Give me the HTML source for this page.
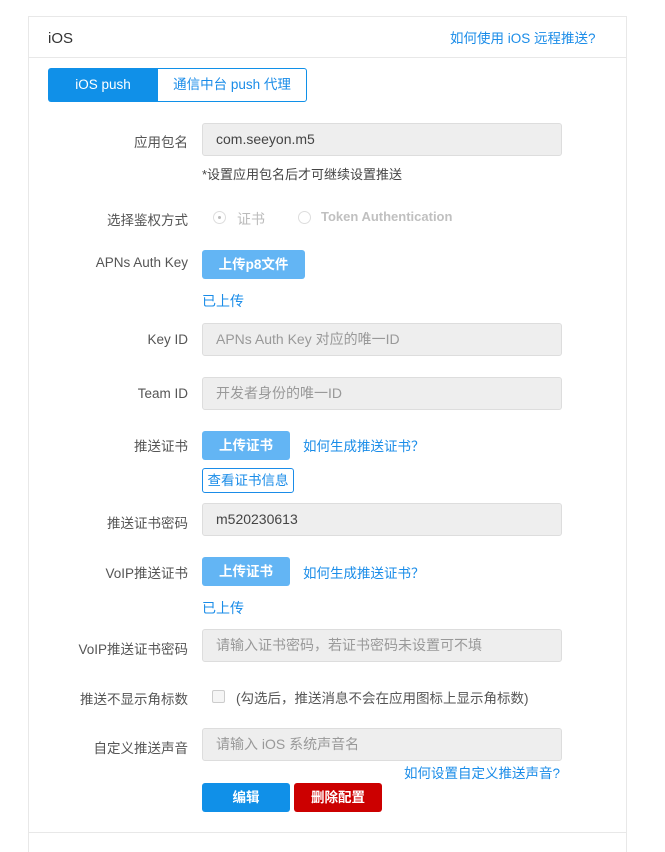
<!DOCTYPE html>
<html><head><meta charset="utf-8"><style>
*{box-sizing:border-box;margin:0;padding:0}
html{width:665px;height:852px;overflow:hidden}
body{width:665px;height:852px;background:#fff;font-family:"Liberation Sans","Noto Sans CJK SC",sans-serif;font-size:14px;color:#333;position:relative;overflow:hidden}
.card{position:absolute;left:28px;top:16px;width:599px;height:836px;border:1px solid #e8e8e8;border-bottom:none}
.hline{position:absolute;left:28px;width:599px;height:1px;background:#e8e8e8}
.a{position:absolute;white-space:nowrap}
.lab{position:absolute;right:477px;white-space:nowrap;color:#555;font-size:13.5px}
.inp{position:absolute;left:202px;width:360px;height:33px;background:#eee;border:1px solid #ddd;border-radius:3px;padding-left:13px;line-height:31px;font-size:14px;color:#999}
.btn{position:absolute;border-radius:3px;color:#fff;text-align:center;font-size:13.5px;font-weight:bold}
.lb{background:#63b5f4}
.link{color:#1a8ce8}
</style></head><body>
<div class="card"></div>
<div class="a" style="left:48px;top:30px;font-size:15px;color:#333">iOS</div>
<div class="a link" style="left:450px;top:27px;font-size:13.5px">如何使用 iOS 远程推送?</div>
<div class="hline" style="top:57px"></div>
<div class="a" style="left:48px;top:68px;width:110px;height:34px;background:#1090e8;color:#fff;border-radius:3px 0 0 3px;text-align:center;line-height:34px;font-size:13.5px">iOS push</div>
<div class="a link" style="left:157px;top:68px;width:150px;height:34px;border:1px solid #1090e8;border-radius:0 3px 3px 0;text-align:center;line-height:32px;font-size:13.5px">通信中台 push 代理</div>

<div class="lab" style="top:131px">应用包名</div>
<div class="inp" style="top:123px;color:#444">com.seeyon.m5</div>
<div class="a" style="left:202px;top:164px;font-size:13px;color:#444">*设置应用包名后才可继续设置推送</div>

<div class="lab" style="top:209px">选择鉴权方式</div>
<div class="a" style="left:213px;top:211px;width:13px;height:13px;border:1px solid #ddd;border-radius:50%"><div style="position:absolute;left:4px;top:4px;width:3px;height:3px;border-radius:50%;background:#bbb"></div></div>
<div class="a" style="left:237px;top:209px;color:#bbb">证书</div>
<div class="a" style="left:298px;top:211px;width:13px;height:13px;border:1px solid #ddd;border-radius:50%"></div>
<div class="a" style="left:321px;top:209px;color:#c0c0c0;font-weight:bold;font-size:13px">Token Authentication</div>

<div class="lab" style="top:255px">APNs Auth Key</div>
<div class="btn lb" style="left:202px;top:250px;width:103px;height:29px;line-height:29px">上传p8文件</div>
<div class="a link" style="left:202px;top:291px">已上传</div>

<div class="lab" style="top:332px">Key ID</div>
<div class="inp" style="top:323px">APNs Auth Key 对应的唯一ID</div>
<div class="lab" style="top:386px">Team ID</div>
<div class="inp" style="top:377px">开发者身份的唯一ID</div>

<div class="lab" style="top:435px">推送证书</div>
<div class="btn lb" style="left:202px;top:431px;width:88px;height:29px;line-height:29px">上传证书</div>
<div class="a link" style="left:303px;top:435px;font-size:13.5px">如何生成推送证书？</div>
<div class="a link" style="left:202px;top:468px;width:92px;height:25px;border:1px solid #1a8ce8;border-radius:3px;text-align:center;line-height:23px;font-size:13.5px">查看证书信息</div>

<div class="lab" style="top:512px">推送证书密码</div>
<div class="inp" style="top:503px;color:#444">m520230613</div>

<div class="lab" style="top:562px">VoIP推送证书</div>
<div class="btn lb" style="left:202px;top:557px;width:88px;height:29px;line-height:29px">上传证书</div>
<div class="a link" style="left:303px;top:562px;font-size:13.5px">如何生成推送证书？</div>
<div class="a link" style="left:202px;top:598px">已上传</div>

<div class="lab" style="top:638px">VoIP推送证书密码</div>
<div class="inp" style="top:629px">请输入证书密码，若证书密码未设置可不填</div>

<div class="lab" style="top:688px">推送不显示角标数</div>
<div class="a" style="left:212px;top:690px;width:13px;height:13px;border:1px solid #ccc;border-radius:2px;background:#f5f5f5"></div>
<div class="a" style="left:236px;top:687px;color:#555;font-size:13.5px">(勾选后，推送消息不会在应用图标上显示角标数)</div>

<div class="lab" style="top:737px">自定义推送声音</div>
<div class="inp" style="top:728px">请输入 iOS 系统声音名</div>
<div class="a link" style="left:404px;top:762px;font-size:13.5px">如何设置自定义推送声音?</div>

<div class="btn" style="left:202px;top:783px;width:88px;height:29px;line-height:29px;background:#1090e8">编辑</div>
<div class="btn" style="left:294px;top:783px;width:88px;height:29px;line-height:29px;background:#cc0000">删除配置</div>
<div class="hline" style="top:832px"></div>
</body></html>
